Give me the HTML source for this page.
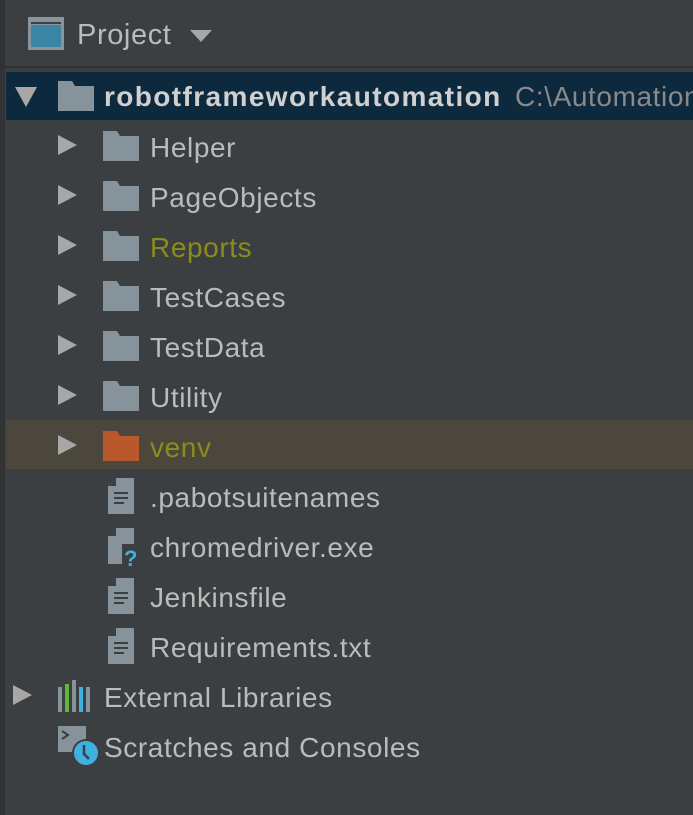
<!DOCTYPE html>
<html><head><style>
body{margin:0;width:693px;height:815px;background:#3c3f41;overflow:hidden;position:relative;font-family:"Liberation Sans",sans-serif;font-size:28px;color:#bbbbbb;letter-spacing:0.6px}
.strip{position:absolute;left:0;top:0;width:5px;height:815px;background:#313335}
.hdr{position:absolute;left:0;top:66px;width:693px;height:2px;background:#323232}
.row{position:absolute;left:6px;width:687px;height:50px}
.t{position:absolute;top:10px;white-space:nowrap}
.tri{position:absolute;width:0;height:0;border-top:10px solid transparent;border-bottom:10px solid transparent;border-left:19px solid #a7a7a7}
.fold{position:absolute}
.ol{color:#8c8c1c}
</style></head><body>
<div class="strip"></div>
<svg style="position:absolute;left:28px;top:17px" width="38" height="34"><rect x="0" y="0" width="36" height="33" fill="#8a949c"/><rect x="3" y="8" width="30" height="22" fill="#3b85a4"/><rect x="3" y="5" width="30" height="2" fill="#3c3f41"/></svg>
<div style="position:absolute;left:77px;top:19px;font-size:29px;color:#bbbbbb">Project</div>
<div style="position:absolute;left:190px;top:30px;width:0;height:0;border-left:11px solid transparent;border-right:11px solid transparent;border-top:12px solid #a7a7a7"></div>
<div class="hdr"></div>

<div class="row" style="top:72px;height:48px;background:#0d293e;overflow:hidden">
 <div style="position:absolute;left:9px;top:15px;width:0;height:0;border-left:11px solid transparent;border-right:11px solid transparent;border-top:20px solid #a7a7a7"></div>
 <svg class="fold" style="left:52px;top:9px" width="36" height="30"><path d="M0 0H14L17 5H36V30H0Z" fill="#87939a"/></svg>
 <div class="t" style="left:98px;top:9px;font-weight:bold;color:#d0d0d0;letter-spacing:1.4px">robotframeworkautomation</div>
 <div class="t" style="left:509px;top:9px;color:#8a8a8a">C:\Automation</div>
</div>

<div class="row" style="top:122px"><div class="tri" style="left:52px;top:13px"></div><svg class="fold" style="left:97px;top:9px" width="36" height="30"><path d="M0 0H14L17 5H36V30H0Z" fill="#87939a"/></svg><div class="t" style="left:144px">Helper</div></div>
<div class="row" style="top:172px"><div class="tri" style="left:52px;top:13px"></div><svg class="fold" style="left:97px;top:9px" width="36" height="30"><path d="M0 0H14L17 5H36V30H0Z" fill="#87939a"/></svg><div class="t" style="left:144px">PageObjects</div></div>
<div class="row" style="top:222px"><div class="tri" style="left:52px;top:13px"></div><svg class="fold" style="left:97px;top:9px" width="36" height="30"><path d="M0 0H14L17 5H36V30H0Z" fill="#87939a"/></svg><div class="t ol" style="left:144px">Reports</div></div>
<div class="row" style="top:272px"><div class="tri" style="left:52px;top:13px"></div><svg class="fold" style="left:97px;top:9px" width="36" height="30"><path d="M0 0H14L17 5H36V30H0Z" fill="#87939a"/></svg><div class="t" style="left:144px">TestCases</div></div>
<div class="row" style="top:322px"><div class="tri" style="left:52px;top:13px"></div><svg class="fold" style="left:97px;top:9px" width="36" height="30"><path d="M0 0H14L17 5H36V30H0Z" fill="#87939a"/></svg><div class="t" style="left:144px">TestData</div></div>
<div class="row" style="top:372px"><div class="tri" style="left:52px;top:13px"></div><svg class="fold" style="left:97px;top:9px" width="36" height="30"><path d="M0 0H14L17 5H36V30H0Z" fill="#87939a"/></svg><div class="t" style="left:144px">Utility</div></div>
<div class="row" style="top:420px;height:49px;background:#4b473d"><div class="tri" style="left:52px;top:15px"></div><svg class="fold" style="left:97px;top:11px" width="36" height="30"><path d="M0 0H14L17 5H36V30H0Z" fill="#b9582a"/></svg><div class="t ol" style="left:144px;top:12px">venv</div></div>

<div class="row" style="top:472px"><svg class="fold" style="left:102px;top:6px" width="26" height="36"><path d="M8 0H26V36H0V8Z" fill="#87939a"/><path d="M0 8H8V0" fill="#3c3f41"/><rect x="6" y="14" width="14" height="2" fill="#3c3f41"/><rect x="6" y="19" width="14" height="2" fill="#3c3f41"/><rect x="6" y="24" width="10" height="2" fill="#3c3f41"/></svg><div class="t" style="left:144px">.pabotsuitenames</div></div>
<div class="row" style="top:522px"><svg class="fold" style="left:102px;top:6px" width="36" height="40"><path d="M8 0H26V36H0V8Z" fill="#87939a"/><path d="M0 8H8V0" fill="#3c3f41"/><rect x="14" y="16" width="16" height="24" fill="#3c3f41"/><text x="16" y="38" font-family="Liberation Sans" font-weight="bold" font-size="22" fill="#3eb1e0">?</text></svg><div class="t" style="left:144px">chromedriver.exe</div></div>
<div class="row" style="top:572px"><svg class="fold" style="left:102px;top:6px" width="26" height="36"><path d="M8 0H26V36H0V8Z" fill="#87939a"/><path d="M0 8H8V0" fill="#3c3f41"/><rect x="6" y="14" width="14" height="2" fill="#3c3f41"/><rect x="6" y="19" width="14" height="2" fill="#3c3f41"/><rect x="6" y="24" width="10" height="2" fill="#3c3f41"/></svg><div class="t" style="left:144px">Jenkinsfile</div></div>
<div class="row" style="top:622px"><svg class="fold" style="left:102px;top:6px" width="26" height="36"><path d="M8 0H26V36H0V8Z" fill="#87939a"/><path d="M0 8H8V0" fill="#3c3f41"/><rect x="6" y="14" width="14" height="2" fill="#3c3f41"/><rect x="6" y="19" width="14" height="2" fill="#3c3f41"/><rect x="6" y="24" width="10" height="2" fill="#3c3f41"/></svg><div class="t" style="left:144px">Requirements.txt</div></div>

<div class="row" style="top:672px"><div class="tri" style="left:7px;top:13px"></div><svg class="fold" style="left:52px;top:8px" width="36" height="32"><rect x="0" y="7" width="4" height="25" fill="#87939a"/><rect x="7" y="4" width="4" height="28" fill="#5fb83a"/><rect x="14" y="0" width="4" height="32" fill="#87939a"/><rect x="21" y="7" width="4" height="25" fill="#3eb1e0"/><rect x="28" y="7" width="4" height="25" fill="#87939a"/></svg><div class="t" style="left:98px">External Libraries</div></div>
<div class="row" style="top:722px"><svg class="fold" style="left:52px;top:4px" width="44" height="44"><rect x="0" y="0" width="28" height="26" fill="#87939a"/><path d="M4 5L10 9L4 13" stroke="#3c3f41" stroke-width="2" fill="none"/><circle cx="28" cy="27" r="14" fill="#3c3f41"/><circle cx="28" cy="27" r="12" fill="#3eb1e0"/><path d="M26 19V28L31 33" stroke="#3c3f41" stroke-width="2.5" fill="none"/></svg><div class="t" style="left:98px">Scratches and Consoles</div></div>
</body></html>
